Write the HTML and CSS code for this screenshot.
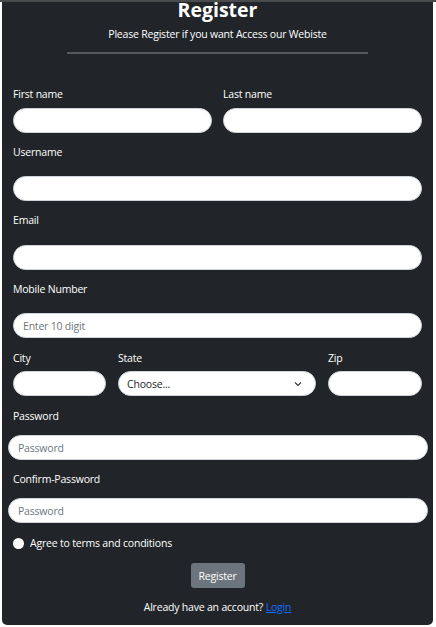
FILE: index.html
```html
<!DOCTYPE html>
<html>
<head>
<meta charset="utf-8">
<link rel="stylesheet" href="styles.css">
</head>
<body>
<div class="topbar"></div>
<div class="card">
  <h1 class="title">Register</h1>
  <p class="subtitle">Please Register if you want Access our Webiste</p>
  <div class="rule"></div>

  <div class="grid2 row-first">
    <div class="field">
      <label class="lbl lbl-names">First name</label>
      <input class="inp" type="text">
    </div>
    <div class="field">
      <label class="lbl lbl-names">Last name</label>
      <input class="inp" type="text">
    </div>
  </div>

  <div class="field row">
    <label class="lbl lbl-wide">Username</label>
    <input class="inp" type="text">
  </div>

  <div class="field row">
    <label class="lbl lbl-wide lbl-email">Email</label>
    <input class="inp" type="email">
  </div>

  <div class="field row">
    <label class="lbl lbl-wide">Mobile Number</label>
    <input class="inp" type="text" placeholder="Enter 10 digit">
  </div>

  <div class="grid3 row">
    <div class="field">
      <label class="lbl lbl-city">City</label>
      <input class="inp" type="text">
    </div>
    <div class="field">
      <label class="lbl lbl-city">State</label>
      <div class="select-wrap">
        <select class="inp sel"><option>Choose...</option></select>
        <svg class="chev" width="8" height="6" viewBox="0 0 8 6"><path d="M1 1.5 L4 4.5 L7 1.5" fill="none" stroke="#343a40" stroke-width="1.2"/></svg>
      </div>
    </div>
    <div class="field">
      <label class="lbl lbl-city">Zip</label>
      <input class="inp" type="text">
    </div>
  </div>

  <div class="field row wide-out">
    <label class="lbl lbl-pw">Password</label>
    <input class="inp" type="password" placeholder="Password">
  </div>

  <div class="field row wide-out">
    <label class="lbl lbl-pw">Confirm-Password</label>
    <input class="inp" type="password" placeholder="Password">
  </div>

  <div class="check row">
    <span class="radio"></span>
    <span class="check-text">Agree to terms and conditions</span>
  </div>

  <div class="btn-row">
    <button class="btn">Register</button>
  </div>

  <p class="already">Already have an account? <a href="#" class="link">Login</a></p>
</div>
</body>
</html>
```

FILE: styles.css
```css
* { box-sizing: border-box; }
html, body { margin: 0; padding: 0; }
body {
  background: #ffffff;
  font-family: "Open Sans", "Noto Sans", sans-serif;
  font-size: 10.5px;
  letter-spacing: -0.2px;
  width: 436px;
  height: 627px;
  overflow: hidden;
}
.topbar {
  height: 2px;
  background: #4a4b4d;
}
.card {
  margin-left: 2px;
  width: 431px;
  height: 623px;
  background: #212529;
  border-radius: 0 0 5px 5px;
  padding: 0 11px;
  color: #ffffff;
}
.title {
  margin: 0;
  text-align: center;
  font-size: 19.5px;
  line-height: 16px;
  font-weight: 700;
  letter-spacing: 0;
}
.subtitle {
  margin: 8px 0 0;
  text-align: center;
  font-size: 10.5px;
  line-height: 16px;
}
.rule {
  margin: 10px auto 0;
  width: 301px;
  height: 2px;
  background: #55585c;
}
.lbl {
  display: block;
  line-height: 16px;
  font-size: 10.5px;
  color: #ffffff;
}
.inp {
  display: block;
  width: 100%;
  height: 25px;
  border: 1px solid #ced4da;
  border-radius: 13px;
  background: #ffffff;
  padding: 0 9px;
  font-family: inherit;
  font-size: 10.5px;
  letter-spacing: -0.2px;
  color: #212529;
  outline: none;
}
.inp::placeholder { color: #6c757d; }
.grid2 {
  display: grid;
  grid-template-columns: 199px 199px;
  column-gap: 11px;
}
.row-first { margin-top: 32px; }
.lbl-names { margin-bottom: 6px; }
.row { margin-top: 11px; }
.lbl-wide { margin-bottom: 16px; }
.lbl-email { margin-bottom: 17px; }
.grid3 {
  display: grid;
  grid-template-columns: 93px 198px 94px;
  column-gap: 12px;
  margin-top: 12px;
}
.lbl-city { margin-bottom: 5px; }
.select-wrap { position: relative; }
.sel {
  appearance: none;
  -webkit-appearance: none;
  padding-left: 8px;
}
.chev {
  position: absolute;
  right: 14px;
  top: 10px;
}
.wide-out {
  margin-left: -5px;
  margin-right: -6px;
  margin-top: 12px;
}
.wide-out .lbl { padding-left: 5px; }
.wide-out + .wide-out { margin-top: 11px; }
.lbl-pw { margin-bottom: 11px; }
.wide-out .inp { padding-left: 9px; }
.check {
  display: flex;
  align-items: center;
  height: 16px;
  margin-top: 12px;
}
.radio {
  width: 11px;
  height: 11px;
  border-radius: 50%;
  background: #ffffff;
  margin-right: 6px;
}
.check-text { line-height: 16px; }
.btn-row {
  display: flex;
  justify-content: center;
  margin-top: 12px;
}
.btn {
  width: 54px;
  height: 25px;
  background: #6c757d;
  color: #ffffff;
  border: none;
  border-radius: 3px;
  font-family: inherit;
  font-size: 10.5px;
  letter-spacing: -0.2px;
  padding: 0;
}
.already {
  margin: 11px 0 0;
  text-align: center;
  line-height: 16px;
}
.link { color: #0d6efd; text-decoration: underline; }
```
